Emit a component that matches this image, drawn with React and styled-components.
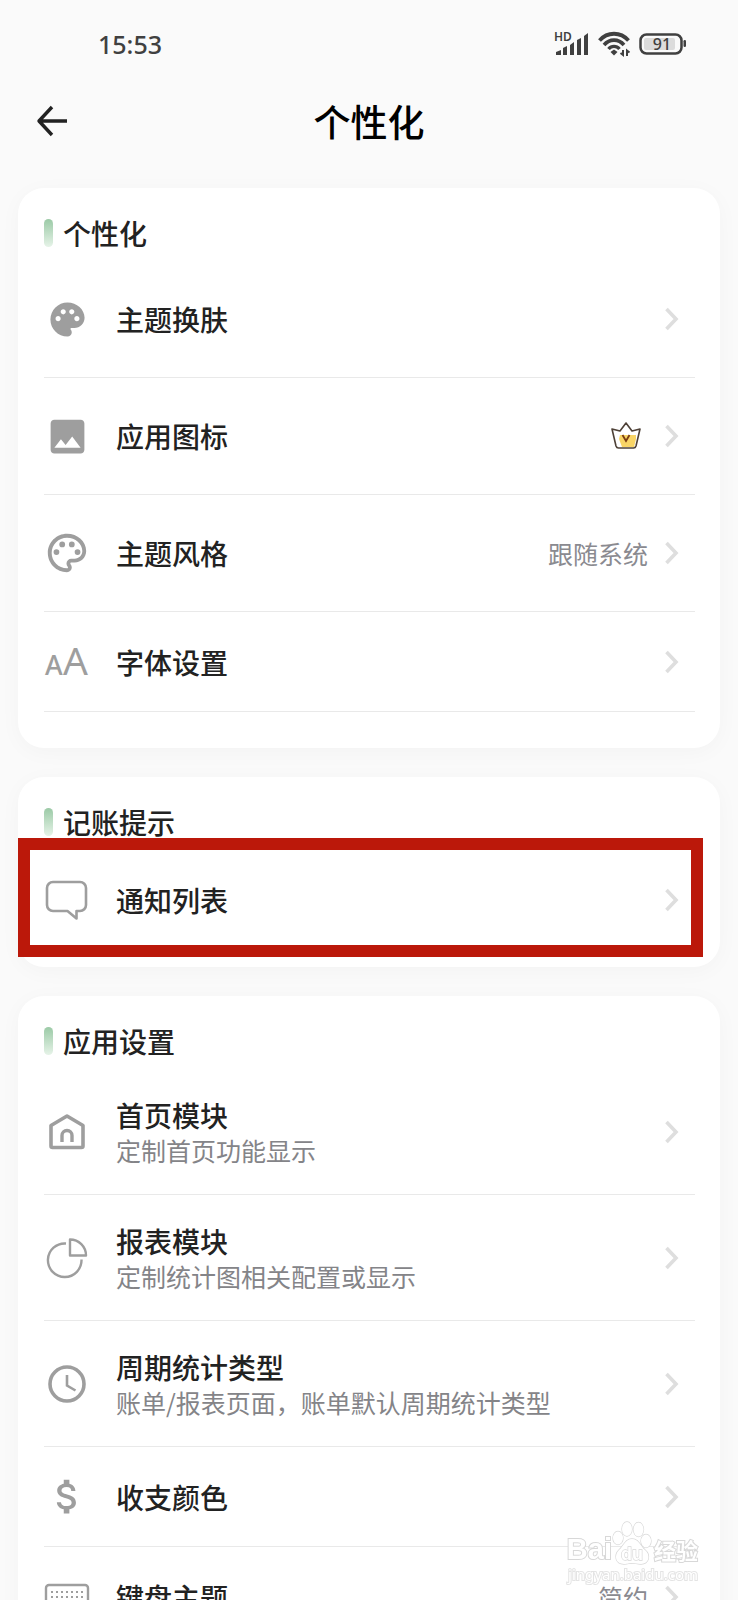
import React from 'react';
import styled, { createGlobalStyle, css } from 'styled-components';
import { MdPalette, MdImage, MdOutlinePalette, MdAttachMoney } from 'react-icons/md';

const GlobalStyle = createGlobalStyle`
  * {
    box-sizing: border-box;
  }

  body {
    margin: 0;
    background: #fafafa;
    color: #222;
    font-family: 'Noto Sans', 'Noto Sans CJK SC', sans-serif;
  }

  svg {
    display: block;
    overflow: visible;
  }
`;

const Screen = styled.div`
  display: flex;
  flex-direction: column;
  height: 100vh;
  overflow: hidden;
`;

const StatusBar = styled.div`
  display: flex;
  flex: none;
  align-items: center;
  justify-content: space-between;
  height: 88px;
  padding: 0 52px 0 98px;
  color: #404040;
`;

const Clock = styled.time`
  font-size: 25px;
  font-weight: 500;
  line-height: 32px;
`;

const StatusIcons = styled.div`
  display: flex;
  align-items: center;
  gap: 9px;
`;

const NavBar = styled.header`
  display: grid;
  flex: none;
  grid-template-columns: 68px 1fr 68px;
  align-items: center;
  height: 66px;
  padding: 0 18px;
`;

const BackButton = styled.button`
  display: flex;
  align-items: center;
  justify-content: center;
  width: 68px;
  height: 66px;
  padding: 0;
  border: 0;
  background: none;
  color: #222;
`;

const PageTitle = styled.h1`
  margin: 0;
  color: #000;
  font-family: 'Noto Sans CJK SC', sans-serif;
  font-size: 37px;
  font-weight: 500;
  line-height: 48px;
  text-align: center;
`;

const Content = styled.main`
  display: flex;
  flex: 1;
  flex-direction: column;
  gap: 29px;
  min-height: 0;
  padding: 34px 18px 0;
  overflow-y: auto;
  scrollbar-width: none;
`;

const Card = styled.section`
  position: relative;
  flex: none;
  padding: 19px 25px ${({ $bottom }) => $bottom}px 26px;
  border-radius: 26px;
  background: #fff;
  box-shadow: 0 4px 22px rgba(0, 0, 0, 0.03);
`;

const SectionTitle = styled.h2`
  display: flex;
  align-items: center;
  gap: 10px;
  height: 52px;
  margin: 0 0 2px;
  font-family: 'Noto Sans CJK SC', sans-serif;
  font-size: 28px;
  font-weight: 500;
  line-height: 40px;

  &:before {
    content: '';
    width: 9px;
    height: 28px;
    border-radius: 5px;
    background: linear-gradient(#9bcaa6, #e6f3e8);
  }
`;

const List = styled.ul`
  margin: 0;
  padding: 0;
  list-style: none;
`;

const rowHeights = { short: 100, tall: 117, double: 126 };

const Item = styled.li`
  height: ${({ $size }) => rowHeights[$size]}px;
  ${({ $divider }) =>
    $divider &&
    css`
      border-bottom: 1px solid #e9e9e9;
    `}
`;

const ItemLink = styled.a`
  display: flex;
  align-items: center;
  height: 100%;
  padding-right: 16px;
  color: inherit;
  text-decoration: none;
`;

const IconBox = styled.span`
  display: flex;
  flex: none;
  align-items: center;
  justify-content: center;
  width: 46px;
  height: 46px;
  margin-right: 26px;
  color: #9e9e9e;
`;

const Labels = styled.span`
  display: flex;
  flex: 1;
  flex-direction: column;
  font-family: 'Noto Sans CJK SC', sans-serif;
`;

const Label = styled.span`
  font-size: 28px;
  font-weight: 500;
  line-height: 36px;
`;

const Description = styled.span`
  color: #848488;
  font-size: 25px;
  line-height: 34px;
`;

const Value = styled.span`
  display: flex;
  margin-right: 16px;
  color: #8a8a90;
  font-family: 'Noto Sans CJK SC', sans-serif;
  font-size: 25px;
  line-height: 34px;
`;

const Highlight = styled.div`
  position: absolute;
  top: 61px;
  right: 17px;
  bottom: 10px;
  left: 0;
  border: 12px solid #bb180a;
  pointer-events: none;
`;

const Watermark = styled.div`
  position: fixed;
  right: 40px;
  bottom: 17px;
  display: flex;
  flex-direction: column;
  align-items: flex-end;
  color: #fff;
  paint-order: stroke fill;
  -webkit-text-stroke: 2px #d8d8d8;
  pointer-events: none;
`;

const WatermarkLogo = styled.div`
  display: flex;
  align-items: flex-end;
  height: 44px;
  font-family: 'Liberation Sans', 'Noto Sans CJK SC', sans-serif;
  font-size: 29px;
  font-weight: 700;
  line-height: 32px;
`;

const WatermarkName = styled.span`
  margin-left: 2px;
  font-family: 'Noto Sans CJK SC', sans-serif;
  font-size: 22px;
`;

const WatermarkSite = styled.div`
  font-family: 'Noto Sans', sans-serif;
  font-size: 15px;
  line-height: 18px;
  -webkit-text-stroke: 2px #e4e4e4;
`;

const Signal = () => (
  <svg width="35" height="24" viewBox="0 0 35 24" fill="currentColor" aria-hidden="true">
    <text x="0" y="9" fontSize="12" fontWeight="600" fontFamily="Noto Sans">
      HD
    </text>
    <path d="M2 20l5-2v5H2zM9 16l4-2v9H9zM16 13l4-3v13h-4zM23 8l4-2v17h-4z" />
    <path d="M30 4l4-3v22h-4z" />
  </svg>
);

const Wifi = () => (
  <svg width="32" height="26" viewBox="0 0 32 26" fill="none" stroke="currentColor" aria-hidden="true">
    <path d="M1.5 9.5C9.5 .5 22.5 .5 30.5 9.5" strokeWidth="3.8" />
    <path d="M6 14C11.5 7.5 20.5 7.5 26 14" strokeWidth="3.6" />
    <path d="M10.5 18C13.5 14.5 18.5 14.5 21.5 18" strokeWidth="3.4" />
    <path d="M16 18.5l3.5 2.5-3.5 3.5-3.5-3.5z" fill="currentColor" stroke="none" />
    <path d="M25 19v5l-2.5-2M29 25v-5.5l2.5 2" strokeWidth="2" />
  </svg>
);

const Battery = () => (
  <svg width="47" height="22" viewBox="0 0 47 22" aria-hidden="true">
    <rect x="1.5" y="1.5" width="41" height="19" rx="6" fill="none" stroke="currentColor" strokeWidth="2.5" />
    <rect x="5" y="5" width="31" height="12" rx="2" fill="#dcdcdc" />
    <rect x="44.5" y="7" width="2.5" height="7" rx="1.2" fill="currentColor" />
    <text x="23" y="17" textAnchor="middle" fill="currentColor" fontSize="16" fontWeight="500" fontFamily="Noto Sans">
      91
    </text>
  </svg>
);

const BackArrow = () => (
  <svg width="32" height="32" viewBox="0 0 32 32" fill="none" stroke="currentColor" strokeWidth="3.4" aria-hidden="true">
    <path d="M16 2L3 16l13 14M3 16h28" strokeLinejoin="round" />
  </svg>
);

const Chevron = () => (
  <svg width="15" height="24" viewBox="0 0 15 24" fill="none" stroke="#dedede" strokeWidth="3.6" aria-hidden="true">
    <path d="M2.5 2l9.5 10-9.5 10" />
  </svg>
);

const Crown = () => (
  <svg width="42" height="30" viewBox="0 0 42 30" fill="none" aria-label="VIP">
    <path d="M14 14h16v4l-2 8H16l-3-8z" fill="#f9d566" />
    <path
      d="M6 8l8 2 6-8 6 8 8-2-4 17q-.6 2-2.5 2h-15q-1.9 0-2.5-2z"
      stroke="#4e4137"
      strokeWidth="1.6"
      strokeLinejoin="round"
    />
    <path d="M16.5 14l3.5 6 3.5-6" stroke="#7a3b12" strokeWidth="1.8" />
  </svg>
);

const FontSize = () => (
  <svg width="46" height="46" viewBox="0 0 46 46" fill="currentColor" fontFamily="Noto Sans" aria-hidden="true">
    <text x="1" y="36" fontSize="27" fontWeight="500">
      A
    </text>
    <text x="19" y="36" fontSize="39">
      A
    </text>
  </svg>
);

const Bubble = () => (
  <svg width="46" height="46" viewBox="0 0 46 46" fill="none" stroke="currentColor" strokeWidth="2.6" aria-hidden="true">
    <path
      d="M9 5h27a6 6 0 0 1 6 6v17a6 6 0 0 1-6 6h-3.5v7.5L23.5 34H9a6 6 0 0 1-6-6V11a6 6 0 0 1 6-6z"
      strokeLinejoin="round"
    />
  </svg>
);

const Home = () => (
  <svg width="46" height="46" viewBox="0 0 46 46" fill="none" stroke="currentColor" strokeLinejoin="round" aria-hidden="true">
    <path d="M23 7L39 16.5V37a1.5 1.5 0 0 1-1.5 1.5h-29A1.5 1.5 0 0 1 7 37V16.5z" strokeWidth="3.6" />
    <path d="M18 33v-6.5a5 5 0 0 1 10 0V33" strokeWidth="3.4" />
  </svg>
);

const PieChart = () => (
  <svg width="46" height="46" viewBox="0 0 46 46" fill="none" stroke="currentColor" strokeWidth="2.4" aria-hidden="true">
    <path d="M22 8.5A16.8 16.8 0 1 0 37.5 24.5" />
    <path d="M26 4.5V20.5H42A16 16 0 0 0 26 4.5z" strokeLinejoin="round" />
  </svg>
);

const ClockIcon = () => (
  <svg width="46" height="46" viewBox="0 0 46 46" fill="none" stroke="currentColor" aria-hidden="true">
    <circle cx="23" cy="23" r="17" strokeWidth="3.6" />
    <path d="M23 14v10.5l8.5 5" strokeWidth="2.6" />
  </svg>
);

const keyColumns = [7, 12, 17, 22, 27, 32, 37];
const keyRows = [17, 22, 27];

const Keyboard = () => (
  <svg width="46" height="46" viewBox="0 0 46 46" fill="none" stroke="currentColor" strokeWidth="2.4" aria-hidden="true">
    <rect x="2" y="11" width="42" height="28" rx="3" />
    {keyRows.map(y => keyColumns.map(x => (
      <rect key={`${x}-${y}`} x={x} y={y} width="2" height="2" fill="currentColor" stroke="none" />
    )))}
    <path d="M13 34h20" />
  </svg>
);

const Paw = () => (
  <svg width="40" height="44" viewBox="0 0 40 44" fill="#fff" stroke="#d8d8d8" strokeWidth="1.3" aria-hidden="true">
    <ellipse cx="6" cy="17" rx="5" ry="6.5" />
    <ellipse cx="15" cy="8" rx="5" ry="7" />
    <ellipse cx="26.5" cy="8.5" rx="5" ry="7" />
    <ellipse cx="34" cy="20" rx="5" ry="6.5" />
    <path d="M20 18C13 18 12 25 7 29C2 34 3 43 12 43C16 43 17 42 20 42C23 42 25 43 29 43C37 43 39 34 33 29C28 25 27 18 20 18z" />
    <text x="20" y="39" textAnchor="middle" fontSize="18" fontWeight="700">
      du
    </text>
  </svg>
);

const sections = [
  {
    title: '个性化',
    bottom: 36,
    items: [
      { label: '主题换肤', icon: <MdPalette size={41} />, size: 'tall', divider: true },
      { label: '应用图标', icon: <MdImage size={45} />, size: 'tall', divider: true, value: <Crown /> },
      { label: '主题风格', icon: <MdOutlinePalette size={46} />, size: 'tall', divider: true, value: '跟随系统' },
      { label: '字体设置', icon: <FontSize />, size: 'short', divider: true },
    ],
  },
  {
    title: '记账提示',
    bottom: 17,
    highlighted: true,
    items: [{ label: '通知列表', icon: <Bubble />, size: 'short' }],
  },
  {
    title: '应用设置',
    bottom: 36,
    items: [
      { label: '首页模块', description: '定制首页功能显示', icon: <Home />, size: 'double', divider: true },
      { label: '报表模块', description: '定制统计图相关配置或显示', icon: <PieChart />, size: 'double', divider: true },
      {
        label: '周期统计类型',
        description: '账单/报表页面，账单默认周期统计类型',
        icon: <ClockIcon />,
        size: 'double',
        divider: true,
      },
      { label: '收支颜色', icon: <MdAttachMoney size={45} />, size: 'short', divider: true },
      { label: '键盘主题', icon: <Keyboard />, size: 'short', value: '简约' },
    ],
  },
];

const App = () => (
  <>
    <GlobalStyle />
    <Screen>
      <StatusBar>
        <Clock>15:53</Clock>
        <StatusIcons>
          <Signal />
          <Wifi />
          <Battery />
        </StatusIcons>
      </StatusBar>

      <NavBar>
        <BackButton type="button" aria-label="返回">
          <BackArrow />
        </BackButton>
        <PageTitle>个性化</PageTitle>
      </NavBar>

      <Content>
        {sections.map(({ title, bottom, highlighted, items }) => (
          <Card key={title} $bottom={bottom}>
            <SectionTitle>{title}</SectionTitle>
            <List>
              {items.map(({ label, description, icon, size, divider, value }) => (
                <Item key={label} $size={size} $divider={divider}>
                  <ItemLink href="#">
                    <IconBox>{icon}</IconBox>
                    <Labels>
                      <Label>{label}</Label>
                      {description && <Description>{description}</Description>}
                    </Labels>
                    {value && <Value>{value}</Value>}
                    <Chevron />
                  </ItemLink>
                </Item>
              ))}
            </List>
            {highlighted && <Highlight />}
          </Card>
        ))}
      </Content>
    </Screen>

    <Watermark>
      <WatermarkLogo>
        <span>Bai</span>
        <Paw />
        <WatermarkName>经验</WatermarkName>
      </WatermarkLogo>
      <WatermarkSite>jingyan.baidu.com</WatermarkSite>
    </Watermark>
  </>
);

export default App;
